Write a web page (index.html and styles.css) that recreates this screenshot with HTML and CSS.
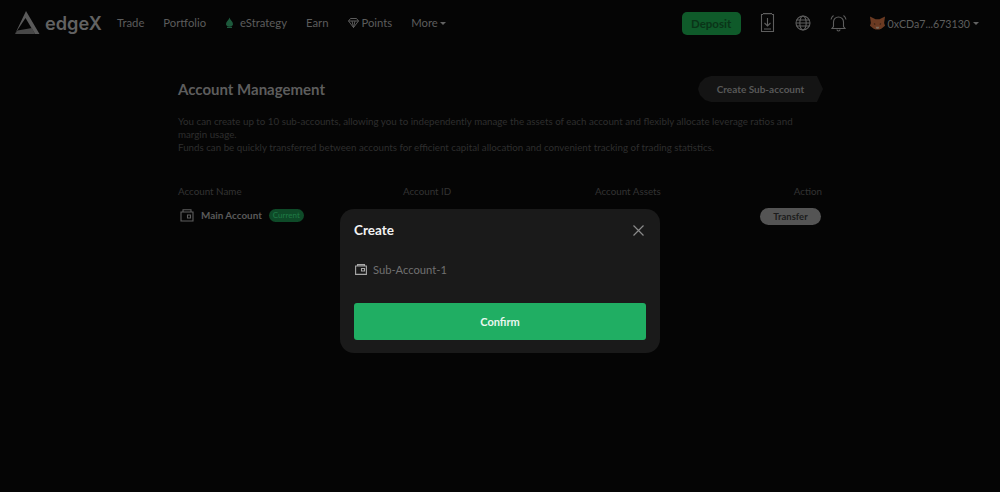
FILE: index.html
```html
<!DOCTYPE html>
<html lang="en">
<head>
  <meta charset="UTF-8">
  <title>Account Management</title>
  <link rel="stylesheet" href="styles.css">
</head>
<body>

  <header class="topbar">
    <div class="logo">
      <svg width="26" height="24" viewBox="0 0 26 24">
        <path d="M12 0 L25.500 23 L21 23 L11.500 7 L3.500 19 L1 23 Z" fill="#5a5a5a"/>
        <path d="M1 23 L3.500 19.500 L18 17 L21 23 Z" fill="#484848"/>
      </svg>
      <span class="logo-text">edgeX</span>
    </div>
    <nav class="nav">
      <a>Trade</a>
      <a>Portfolio</a>
      <a class="with-icon">
        <svg class="leaf" width="9" height="11" viewBox="0 0 9 11"><path d="M4.500 0.500C5 3 8 4.500 8 7c0 1.500-1 2.500-3.500 2.500S1 8.500 1 7c0-2.500 3-4 3.500-6.500zM2 9.800h5V11H2z" fill="#1d5a3c"/></svg>
        eStrategy
      </a>
      <a>Earn</a>
      <a class="with-icon">
        <svg width="11" height="10" viewBox="0 0 11 10" fill="none" stroke="#5c5c5c"><path d="M2.500.5h6l2 2.500-5 6.500-5-6.500zM.5 3h10M4 3l1.500 6.500L7 3"/></svg>
        Points
      </a>
      <a>More<i class="caret"></i></a>
    </nav>
    <div class="top-right">
      <button class="deposit">Deposit</button>
      <svg class="phone" width="15" height="20" viewBox="0 0 15 20" fill="none" stroke="#5e5e5e" stroke-width="1.1">
        <path d="M3 1.500H1.500v17h12v-17H12M3 .6h9"/>
        <path d="M7.500 5v8M4.500 10l3 3 3-3M4 16h7"/>
      </svg>
      <svg class="globe" width="16" height="16" viewBox="0 0 16 16" fill="none" stroke="#5e5e5e" stroke-width="1.1">
        <circle cx="8" cy="8" r="7"/>
        <ellipse cx="8" cy="8" rx="3.200" ry="7"/>
        <path d="M1.500 5h13M1 8h14M1.500 11h13"/>
      </svg>
      <svg class="bell" width="17" height="18" viewBox="0 0 17 18" fill="none" stroke="#5e5e5e" stroke-width="1.1">
        <path d="M3.500 12.500V8a5 5 0 0 1 10 0v4.500l1.500 2H2zM7 15.500a1.500 1.500 0 0 0 3 0M1 5.500Q1.500 3 3.500 1.500M16 5.500Q15.500 3 13.500 1.500"/>
      </svg>
      <div class="wallet">
        <svg width="17" height="16" viewBox="0 0 18 16">
          <path d="M1 1l6 3h4l6-3-1 7 1 3-4 3-2 1H7l-2-1-4-3 1-3z" fill="#6b3a22"/>
          <path d="M5 8l2 1-1 1zM13 8l-2 1 1 1z" fill="#2a1a10"/>
          <path d="M7 12h4l-1 2H8z" fill="#7a6a5c"/>
        </svg>
        <span>0xCDa7...673130</span><i class="caret"></i>
      </div>
    </div>
  </header>

  <main class="page">
    <div class="title-row">
      <h1>Account Management</h1>
      <button class="create-btn">Create Sub-account</button>
    </div>
    <p class="intro">You can create up to 10 sub-accounts, allowing you to independently manage the assets of each account and flexibly allocate leverage ratios and margin usage.<br>Funds can be quickly transferred between accounts for efficient capital allocation and convenient tracking of trading statistics.</p>

    <div class="table-head">
      <span>Account Name</span>
      <span>Account ID</span>
      <span>Account Assets</span>
      <span>Action</span>
    </div>
    <div class="table-row">
      <div class="acc-name">
        <svg width="14" height="13" viewBox="0 0 14 13" fill="none" stroke="#5e5e5e" stroke-width="1.1">
          <path d="M3 3V.8h8V3M1 3h12v9H1z"/>
          <path d="M7.500 6h3v3h-3z"/>
        </svg>
        <strong>Main Account</strong>
        <span class="current">Current</span>
      </div>
      <button class="transfer">Transfer</button>
    </div>
  </main>

  <div class="modal">
    <div class="modal-head">
      <h2>Create</h2>
      <svg width="11" height="11" viewBox="0 0 11 11" stroke="#8a8a8a" stroke-width="1.2">
        <path d="M.5.5l10 10M10.500.5l-10 10"/>
      </svg>
    </div>
    <div class="modal-field">
      <svg width="12" height="11" viewBox="0 0 12 11" fill="none" stroke="#a8a8a8" stroke-width="1.1">
        <path d="M2.500 2V.6h7V2M.6 2h10.800v8.400H.6z"/>
        <path d="M6.500 4.500h3v2.500h-3z"/>
      </svg>
      <span>Sub-Account-1</span>
    </div>
    <button class="confirm">Confirm</button>
  </div>

</body>
</html>
```

FILE: styles.css
```css
* {
  box-sizing: border-box;
}

body {
  margin: 0;
  height: 492px;
  overflow: hidden;
  position: relative;
  background-color: #050505;
  font-family: "Lato", "Liberation Sans", sans-serif;
  color: #5e5e5e;
}

button {
  font-family: inherit;
  border: none;
}

/* top bar */
.topbar {
  display: flex;
  align-items: center;
  height: 46px;
  padding: 0 21px 0 14px;
}

.logo {
  display: flex;
  align-items: center;
  gap: 5px;
  width: 103px;
}

.logo-text {
  font-family: "Inter", sans-serif;
  font-size: 18.200px;
  font-weight: 600;
  color: #626262;
}

.nav {
  display: flex;
  gap: 19px;
  font-size: 11.300px;
  color: #5c5c5c;
  margin-top: -2px;
}

.with-icon svg {
  vertical-align: -1px;
}

.with-icon .leaf {
  margin-right: 3px;
}

.caret {
  display: inline-block;
  margin-left: 2px;
  vertical-align: middle;
  border-left: 3px solid transparent;
  border-right: 3px solid transparent;
  border-top: 3px solid #626262;
}

.top-right {
  margin-left: auto;
  display: flex;
  align-items: center;
}

.deposit {
  width: 59px;
  height: 23px;
  margin-right: 19px;
  border-radius: 5px;
  background-color: #0f5a2a;
  color: #0a3418;
  font-size: 11.500px;
  font-weight: 700;
}

.phone {
  margin-right: 20px;
}

.globe {
  margin-right: 19px;
}

.bell {
  margin-right: 22px;
}

.wallet {
  display: flex;
  align-items: center;
  gap: 1px;
  font-size: 10.650px;
  color: #5e5e5e;
}

.wallet svg {
  margin-right: 1px;
}

/* account page */
.page {
  width: 644px;
  margin: 30px 0 0 178px;
}

.title-row {
  display: flex;
  align-items: center;
  justify-content: space-between;
  height: 26px;
}

h1 {
  margin: 0;
  font-size: 15px;
  font-weight: 700;
  color: #5d5d5d;
}

.create-btn {
  width: 125px;
  height: 26px;
  margin-right: -1px;
  background-color: #141414;
  color: #585858;
  font-size: 10px;
  font-weight: 700;
  clip-path: polygon(13px 0, calc(100% - 6px) 0, 100% 50%, calc(100% - 6px) 100%, 13px 100%, 7px 24px, 2px 19px, 0 13px, 2px 7px, 7px 2px);
}

.intro {
  margin: 13px 0 0;
  font-size: 9.750px;
  line-height: 13px;
  color: #2e2e2e;
}

.table-head {
  display: grid;
  grid-template-columns: 225px 192px 1fr auto;
  margin-top: 31px;
  font-size: 9.800px;
  color: #333333;
}

.table-row {
  display: flex;
  align-items: center;
  justify-content: space-between;
  margin-top: 10px;
  height: 18px;
}

.acc-name {
  display: flex;
  align-items: center;
  padding-left: 2px;
  margin-top: -2px;
}

.acc-name strong {
  margin-left: 7px;
  font-size: 9.900px;
  font-weight: 700;
  color: #5a5a5a;
}

.current {
  margin-left: 7px;
  padding: 0 4px;
  height: 13px;
  line-height: 13px;
  border-radius: 7px;
  background-color: #0e4a28;
  color: #1f7a46;
  font-size: 8px;
}

.transfer {
  width: 61px;
  height: 17px;
  margin-right: 1px;
  border-radius: 9px;
  background-color: #545454;
  color: #1c1c1c;
  font-size: 9.500px;
  font-weight: 700;
}

/* modal */
.modal {
  position: absolute;
  left: 340px;
  top: 209px;
  width: 320px;
  height: 144px;
  padding: 0 13px 0 14px;
  border-radius: 14px;
  background-color: #1a1a1a;
}

.modal-head {
  display: flex;
  align-items: center;
  justify-content: space-between;
  height: 42px;
  padding-right: 3px;
}

h2 {
  margin: 0;
  font-size: 13.500px;
  font-weight: 700;
  color: #f2f2f2;
}

.modal-field {
  display: flex;
  align-items: center;
  gap: 6px;
  height: 20px;
  margin-top: 8px;
  padding-left: 1px;
  font-size: 11.200px;
  color: #707070;
}

.confirm {
  display: block;
  width: 292px;
  height: 37px;
  margin-top: 24px;
  border-radius: 3px;
  background-color: #20ae63;
  color: #eaf7ef;
  font-size: 11px;
  font-weight: 700;
}
```
